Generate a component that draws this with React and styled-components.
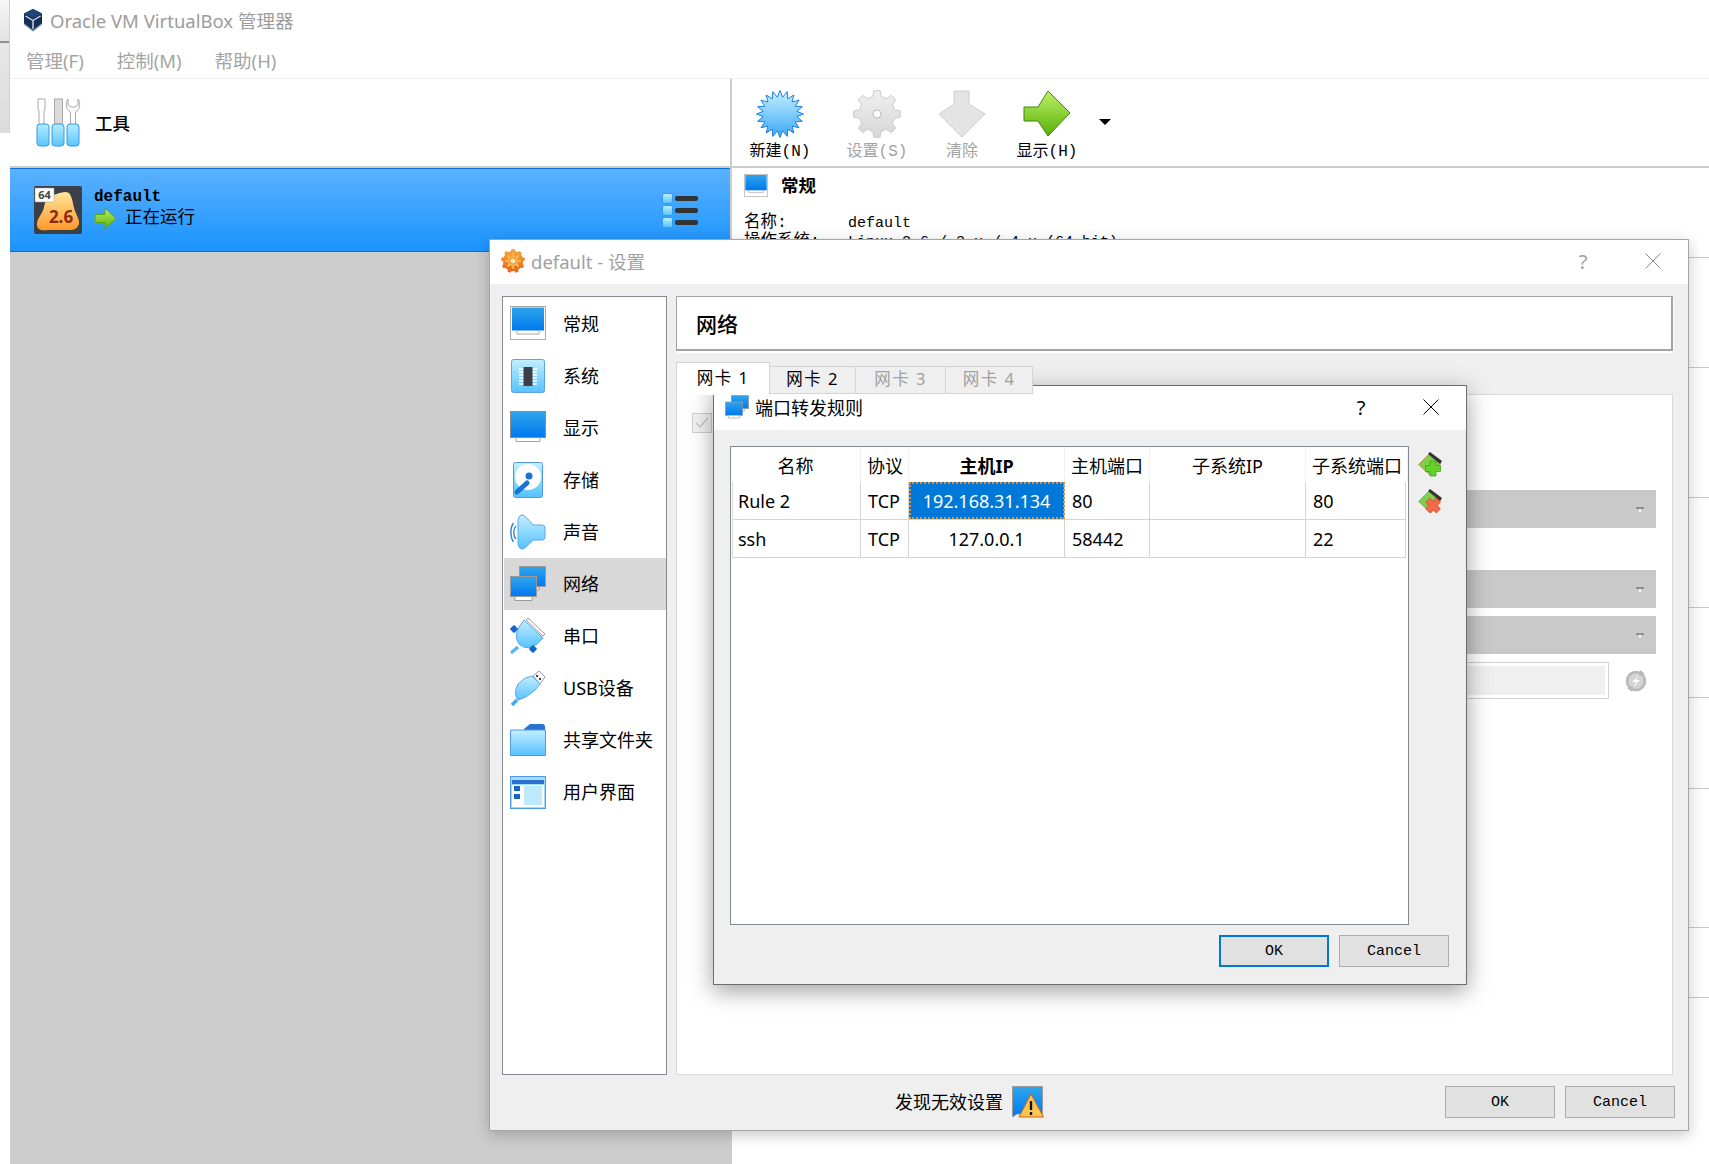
import React from 'react'
import styled, { createGlobalStyle } from 'styled-components'

const SANS = '"Noto Sans", "Noto Sans CJK SC", sans-serif'
const MONO = '"Liberation Mono", "Noto Sans CJK SC", monospace'

const GlobalStyle = createGlobalStyle`
  html, body { margin: 0; padding: 0; background: #fff; }
  body { font-family: ${SANS}; color: #000; }
  * { box-sizing: border-box; }
  svg { flex: none; }
`

const ui = {
  Page: styled.div`
    position: relative;
    display: flex;
    width: 1709px;
    height: 1164px;
    overflow: hidden;
    background: #fff;
  `,
  Strip: styled.div`
    width: 10px;
    flex: none;
    height: 133px;
    border-right: 1px solid #d0d0d0;
    background: linear-gradient(#f6f6f6, #e2e2e2 41px, #8f8f8f 41px, #8f8f8f 43px, #e6e6e6 43px, #dcdcdc);
  `,
  Window: styled.div`
    flex: 1;
    display: flex;
    flex-direction: column;
    min-width: 0;
  `,
  TitleBar: styled.div`
    height: 41px;
    display: flex;
    align-items: center;
    gap: 6px;
    padding: 0 0 2px 12px;
    font-size: 18.500px;
    color: #9c9c9c;
  `,
  MenuBar: styled.div`
    height: 38px;
    display: flex;
    align-items: center;
    gap: 33px;
    padding-left: 16px;
    font-size: 18.500px;
    color: #a4a4a4;
    border-bottom: 1px solid #eee;
  `,
  Split: styled.div`
    flex: 1;
    display: flex;
    min-height: 0;
  `,
  LeftPane: styled.div`
    width: 722px;
    flex: none;
    background: #cdcdcd;
    border-right: 2px solid #cdcdcd;
  `,
  ToolsRow: styled.div`
    height: 89px;
    display: flex;
    align-items: center;
    gap: 14px;
    padding-left: 26px;
    background: #fff;
    border-bottom: 2px solid #ccc;
    font-size: 17.500px;
    font-weight: 500;
  `,
  MachineRow: styled.div`
    height: 84px;
    display: flex;
    align-items: center;
    gap: 12px;
    padding: 0 32px 0 24px;
    background: linear-gradient(#5ab1ff, #1b94fd);
    border-top: 1px solid #0a72d4;
    border-bottom: 1px solid #0a72d4;
  `,
  MachineText: styled.div`
    flex: 1;
    display: flex;
    flex-direction: column;
    margin-top: -3px;
  `,
  MachineName: styled.div`
    font: bold 16px/18px ${MONO};
  `,
  MachineState: styled.div`
    display: flex;
    align-items: center;
    gap: 8px;
    height: 22px;
    margin-top: 1px;
    font-size: 17.500px;
    line-height: 18px;
    span { margin-top: -4px; }
  `,
  RightPane: styled.div`
    flex: 1;
    display: flex;
    flex-direction: column;
  `,
  Toolbar: styled.div`
    height: 89px;
    flex: none;
    display: flex;
    align-items: flex-start;
    gap: 37px;
    padding: 11px 0 0 18px;
    border-bottom: 2px solid #ccc;
  `,
  ToolButton: styled.div`
    width: ${p => p.$w}px;
    display: flex;
    flex-direction: column;
    align-items: center;
    font: 16px/22px ${MONO};
    white-space: nowrap;
    color: ${p => (p.$off ? '#a2a2a2' : '#000')};
    svg { margin-bottom: 3px; }
  `,
  Caret: styled.div`
    margin: 29px 0 0 -15px;
    border-top: 6px solid #000;
    border-left: 6px solid transparent;
    border-right: 6px solid transparent;
  `,
  Section: styled.div`
    height: ${p => p.$h}px;
    flex: none;
    padding: 6px 0 0 12px;
    border-bottom: 1px solid #c9c9c9;
  `,
  SectionHead: styled.div`
    display: flex;
    align-items: center;
    gap: 13px;
    height: 24px;
    margin-bottom: 15px;
    font-size: 17.500px;
    font-weight: 700;
    span { margin-top: -4px; }
  `,
  DetailRow: styled.div`
    display: grid;
    grid-template-columns: 104px 1fr;
    align-items: baseline;
    height: 19px;
    font: 15px/19px ${MONO};
  `,
  DetailLabel: styled.span`
    font-size: 16.500px;
  `,

  Settings: styled.div`
    position: absolute;
    left: 489px;
    top: 239px;
    width: 1200px;
    height: 892px;
    display: flex;
    flex-direction: column;
    background: #efefef;
    border: 1px solid #a5a5a5;
    box-shadow: 0 4px 14px rgba(0, 0, 0, 0.22);
  `,
  DialogTitle: styled.div`
    height: 44px;
    flex: none;
    display: flex;
    align-items: center;
    background: #fff;
    font-size: ${p => p.$size}px;
    color: ${p => (p.$dim ? '#a0a0a0' : '#000')};
    padding: 0 0 2px ${p => p.$left}px;
    gap: 6px;
  `,
  TitleText: styled.div`
    flex: 1;
  `,
  TitleHelp: styled.div`
    width: 70px;
    text-align: center;
    font-size: 20px;
  `,
  TitleClose: styled.div`
    width: 70px;
    margin-left: -6px;
    display: flex;
    justify-content: center;
  `,
  SettingsBody: styled.div`
    flex: 1;
    display: flex;
    gap: 9px;
    padding: 12px 15px 0 12px;
    min-height: 0;
  `,
  Sidebar: styled.div`
    width: 165px;
    flex: none;
    height: 779px;
    padding: 1px 0 1px 1px;
    background: #fff;
    border: 1px solid #868892;
  `,
  SideItem: styled.div`
    height: 52px;
    display: flex;
    align-items: center;
    gap: 17px;
    padding-left: 6px;
    font-size: 18px;
    background: ${p => (p.$active ? '#d8d8d8' : 'transparent')};
    span { margin-top: -3px; }
  `,
  SettingsMain: styled.div`
    flex: 1;
    min-width: 0;
    display: flex;
    flex-direction: column;
  `,
  PageHeader: styled.div`
    height: 55px;
    flex: none;
    display: flex;
    align-items: center;
    padding-left: 19px;
    background: #fff;
    border: 1px solid #a3a3a3;
    border-width: 1px 2px 2px 1px;
    box-shadow: 1px 2px 0 #fff;
    font-size: 21px;
    font-weight: 500;
  `,
  Tabs: styled.div`
    display: flex;
    align-items: flex-end;
    height: 32px;
    margin-top: 11px;
    flex: none;
    position: relative;
    z-index: 1;
  `,
  Tab: styled.div`
    height: ${p => (p.$active ? 33 : 28)}px;
    margin-bottom: ${p => (p.$active ? -1 : 0)}px;
    width: ${p => p.$w}px;
    padding-top: ${p => (p.$active ? 3 : 0)}px;
    text-align: center;
    font-size: 16.500px;
    line-height: 24px;
    letter-spacing: 1.500px;
    white-space: pre;
    color: ${p => (p.$off ? '#a0a0a0' : '#000')};
    background: ${p => (p.$active ? '#fff' : '#efefef')};
    border: 1px solid #d4d4d4;
    border-bottom-color: ${p => (p.$active ? '#fff' : '#d4d4d4')};
    border-left-width: ${p => (p.$active ? 1 : 0)}px;
  `,
  TabPanel: styled.div`
    flex: none;
    height: 681px;
    display: flex;
    flex-direction: column;
    padding: 18px 16px 0 15px;
    background: #fff;
    border: 1px solid #d8d8d8;
  `,
  Checkbox: styled.div`
    width: 20px;
    height: 20px;
    display: flex;
    align-items: center;
    justify-content: center;
    background: #f2f2f2;
    border: 1px solid #cfcfcf;
  `,
  Select: styled.div`
    width: 756px;
    height: 38px;
    flex: none;
    align-self: flex-end;
    margin-top: ${p => p.$top}px;
    display: flex;
    align-items: center;
    justify-content: flex-end;
    padding-right: 12px;
    background: #c9c9c9;
  `,
  SelectArrow: styled.div`
    width: 8px;
    height: 5px;
    border-top: 2px solid #8f8f8f;
    background: linear-gradient(90deg, transparent 3px, #f4f4f4 3px, #f4f4f4 5px, transparent 5px);
  `,
  InputRow: styled.div`
    display: flex;
    align-items: center;
    justify-content: flex-end;
    gap: 15px;
    margin-top: 8px;
    padding-right: 8px;
  `,
  Input: styled.div`
    width: 700px;
    height: 37px;
    padding: 3px;
    background: #fff;
    border: 1px solid #d2d2d2;
    &::after {
      content: '';
      display: block;
      height: 100%;
      background: #efefef;
    }
  `,
  Footer: styled.div`
    height: 44px;
    flex: none;
    display: flex;
    align-items: flex-start;
    justify-content: flex-end;
    gap: 10px;
    margin-top: 9px;
    padding-right: 13px;
  `,
  Warning: styled.div`
    display: flex;
    align-items: center;
    gap: 9px;
    height: 32px;
    margin-right: 391px;
    font-size: 18px;
    span { margin-top: -3px; }
  `,
  Button: styled.div`
    width: 110px;
    height: 32px;
    display: flex;
    align-items: center;
    justify-content: center;
    font: 15px ${MONO};
    background: #e1e1e1;
    border: ${p => (p.$primary ? '2px solid #0078d7' : '1px solid #adadad')};
  `,

  PortDialog: styled.div`
    position: absolute;
    left: 713px;
    top: 385px;
    width: 754px;
    height: 600px;
    display: flex;
    flex-direction: column;
    background: #efefef;
    border: 1px solid #6e6e6e;
    box-shadow: 0 6px 22px rgba(0, 0, 0, 0.38);
  `,
  PortBody: styled.div`
    display: flex;
    gap: 9px;
    padding: 16px 0 0 16px;
  `,
  RuleFrame: styled.div`
    width: 679px;
    height: 479px;
    flex: none;
    background: #fff;
    border: 1px solid #828790;
  `,
  HeaderRow: styled.div`
    display: grid;
    grid-template-columns: 130px 48px 156px 85px 156px 1fr;
    height: 35px;
    font-size: 18px;
  `,
  HeaderCell: styled.div`
    display: flex;
    align-items: center;
    justify-content: ${p => (p.$center ? 'center' : 'flex-start')};
    padding-left: ${p => (p.$center ? 0 : 6)}px;
    font-weight: ${p => (p.$bold ? 700 : 400)};
    white-space: nowrap;
    border-right: 1px solid #f2f2f2;
  `,
  RuleRow: styled.div`
    display: grid;
    grid-template-columns: 128px 48px 156px 85px 156px 1fr;
    height: 38px;
    margin: 0 2px 0 1px;
    border-left: 1px solid #dcdcdc;
    border-bottom: 1px solid #d5d5d5;
    font-size: 18px;
  `,
  RuleCell: styled.div`
    display: flex;
    align-items: center;
    justify-content: ${p => (p.$center ? 'center' : 'flex-start')};
    padding-left: ${p => (p.$center ? 0 : 7)}px;
    border-right: 1px solid #d5d5d5;
    color: ${p => (p.$selected ? '#fff' : '#000')};
    background: ${p => (p.$selected ? '#0078d7' : 'transparent')};
    outline: ${p => (p.$selected ? '2px dotted #f08c2a' : 'none')};
    outline-offset: -2px;
    &:first-child { padding-left: 5px; }
  `,
  SideTools: styled.div`
    display: flex;
    flex-direction: column;
    gap: 12px;
    padding-top: 6px;
  `,
  PortFooter: styled.div`
    display: flex;
    justify-content: flex-end;
    gap: 10px;
    margin-top: 10px;
    padding-right: 17px;
  `,
}

const ring = (cx, cy, ro, ri, n) => {
  const pts = []
  for (let i = 0; i < n * 2; i++) {
    const r = i % 2 ? ri : ro
    const a = (Math.PI * i) / n - Math.PI / 2
    pts.push(`${(cx + r * Math.cos(a)).toFixed(2)},${(cy + r * Math.sin(a)).toFixed(2)}`)
  }
  return pts.join(' ')
}

const cog = (cx, cy, ro, ri, n) => {
  const pts = []
  const step = (Math.PI * 2) / n
  for (let i = 0; i < n; i++) {
    const a = i * step - Math.PI / 2
    const d = step * 0.17
    const e = step * 0.3
    ;[[ri, -e], [ro, -d], [ro, d], [ri, e]].forEach(([r, o]) => {
      pts.push(`${(cx + r * Math.cos(a + o)).toFixed(2)},${(cy + r * Math.sin(a + o)).toFixed(2)}`)
    })
  }
  return pts.join(' ')
}

const Grad = ({ id, from, to }) => (
  <linearGradient id={id} x1="0" y1="0" x2="0" y2="1">
    <stop offset="0" stopColor={from} />
    <stop offset="1" stopColor={to} />
  </linearGradient>
)

const Defs = () => (
  <svg width="0" height="0" style={{ position: 'absolute' }}>
    <defs>
      <Grad id="screen" from="#2fa6ea" to="#0078f0" />
      <Grad id="pale" from="#c4efff" to="#55c2ff" />
      <Grad id="green" from="#bdf268" to="#58ae06" />
      <Grad id="star" from="#c6f0ff" to="#3ba8f6" />
      <Grad id="grey" from="#f0f0f0" to="#d6d6d6" />
      <Grad id="blob" from="#ffe79c" to="#ff982a" />
      <Grad id="handle" from="#b6ecff" to="#5cc6fb" />
      <Grad id="flame" from="#f9a13a" to="#e8661a" />
    </defs>
  </svg>
)

const VBoxLogo = () => (
  <svg width="22" height="24" viewBox="0 0 22 24">
    <polygon points="11,1 20,5.5 20,16 11,23 2,16 2,5.5" fill="#14305a" />
    <polygon points="11,1 20,5.5 11,10 2,5.5" fill="#1f4478" />
    <path d="M11 12.5V21M11 12.5L3.5 8M11 12.5L18.5 8" stroke="#d5deea" strokeWidth="1.4" fill="none" />
    <path d="M2 16l9 7 9-7" stroke="#9aa9bd" strokeWidth="1.2" fill="none" />
  </svg>
)

const ToolsIcon = () => (
  <svg width="45" height="49" viewBox="0 0 45 49">
    <path d="M2 1h7v10l-1 2v14H3V13l-1-2z" fill="#fff" stroke="#a8a8a8" />
    <rect x="18.500" y="1" width="8" height="26" fill="#dadada" stroke="#a8a8a8" />
    <path d="M34.500 27V14C30 12 29 5 32 1V7L35 9H39L42 7V1C45 5 44 12 39.500 14V27Z" fill="#fff" stroke="#a8a8a8" />
    <rect x="1" y="26" width="12" height="22" rx="3" fill="url(#handle)" stroke="#2f9be8" />
    <rect x="16" y="26" width="12" height="22" rx="3" fill="url(#handle)" stroke="#2f9be8" />
    <rect x="31" y="26" width="12" height="22" rx="3" fill="url(#handle)" stroke="#2f9be8" />
  </svg>
)

const MachineIcon = () => (
  <svg width="48" height="48" viewBox="0 0 48 48">
    <rect width="48" height="48" rx="2" fill="#3b4048" />
    <path d="M19 9C24 8 30 4 35 7C39 12 39 20 41 25C43 30 47 36 44 40C41 45 36 44 30 44L14 44C8 45 2 44 3 37C4 31 9 27 10 21C11 15 14 10 19 9Z" fill="url(#blob)" />
    <rect x="1" y="2" width="19" height="14" fill="#fff" stroke="#999" strokeWidth="0.5" />
    <text x="10.500" y="13" textAnchor="middle" fontFamily="Noto Sans" fontWeight="700" fontSize="11" fill="#444">64</text>
    <text x="27" y="37" textAnchor="middle" fontFamily="Noto Sans" fontWeight="700" fontSize="17" fill="#8c2a0c">2.6</text>
  </svg>
)

const SmallArrow = () => (
  <svg width="23" height="23" viewBox="0 0 23 23">
    <path d="M1 7.500H11V1L22 11.500L11 22V15.500H1Z" fill="url(#green)" stroke="#58a80e" />
  </svg>
)

const DetailsIcon = () => (
  <svg width="36" height="34" viewBox="0 0 36 34">
    {[0, 12, 24].map(y => (
      <g key={y}>
        <rect x="0.500" y={y + 0.5} width="10" height="10" rx="2" fill="url(#pale)" stroke="#2f9be8" />
        <rect x="13" y={y + 3} width="23" height="5" rx="2" fill="#333" />
      </g>
    ))}
  </svg>
)

const NewIcon = () => (
  <svg width="48" height="48" viewBox="0 0 48 48">
    <polygon points={ring(24, 24, 23.5, 17, 20)} fill="url(#star)" stroke="#1e80e2" strokeWidth="1" />
  </svg>
)

const GearIcon = () => (
  <svg width="48" height="48" viewBox="0 0 48 48">
    <polygon points={cog(24, 24, 23.5, 18, 8)} fill="url(#grey)" stroke="#cbcbcb" />
    <circle cx="24" cy="24" r="4" fill="#fff" stroke="#bdbdbd" />
  </svg>
)

const DropIcon = () => (
  <svg width="48" height="48" viewBox="0 0 48 48">
    <polygon points="16,1 31,1 31,14 47,24 24,47 1,24 16,14" fill="#e4e4e4" stroke="#cfcfcf" />
  </svg>
)

const ShowIcon = () => (
  <svg width="48" height="48" viewBox="0 0 48 48">
    <polygon points="1,17 15,17 25,1 47,23 25,46 15,31 1,31" fill="url(#green)" stroke="#3f8a08" />
  </svg>
)

const MonitorGeneral = ({ size = 36 }) => (
  <svg width={size} height={size} viewBox="0 0 36 36">
    <rect x="0.500" y="0.500" width="35" height="33" fill="#fff" stroke="#a9a9a9" />
    <rect x="2" y="1.500" width="32" height="23" fill="url(#screen)" />
    <path d="M7 25v3h22v-3" fill="none" stroke="#a9a9a9" />
  </svg>
)

const SystemIcon = () => (
  <svg width="36" height="36" viewBox="0 0 36 36">
    <rect x="1.500" y="1.500" width="33" height="33" rx="2" fill="url(#pale)" stroke="#5da3e4" />
    <path d="M9 11h18M9 14h18M9 17h18M9 20h18M9 23h18M9 26h18" stroke="#fff" strokeWidth="1.4" />
    <rect x="13.500" y="9" width="9" height="19" fill="#3a3f48" />
  </svg>
)

const DisplayIcon = () => (
  <svg width="36" height="36" viewBox="0 0 36 36">
    <rect x="0.500" y="1.500" width="35" height="26" fill="url(#screen)" stroke="#8d8d8d" />
    <path d="M6 28v3.500h24V28" fill="#fff" stroke="#a5a5a5" />
  </svg>
)

const StorageIcon = () => (
  <svg width="36" height="36" viewBox="0 0 36 36">
    <rect x="3.500" y="0.500" width="29" height="35" rx="2" fill="url(#pale)" stroke="#4f9be3" />
    <circle cx="18" cy="15" r="13" fill="#fff" />
    <circle cx="19" cy="14" r="3.500" fill="#1b72d6" />
    <path d="M7 30L17 21" stroke="#1b72d6" strokeWidth="5" strokeLinecap="round" />
  </svg>
)

const AudioIcon = () => (
  <svg width="36" height="36" viewBox="0 0 36 36">
    <path d="M6 12C3 15 3 22 6 25M3.500 9C0 14 0 23 3.500 28" fill="none" stroke="#2f86dc" strokeWidth="1.4" />
    <path d="M8 6Q9 1 12 1Q15 1 23 11H32Q35 11 35 14V23Q35 26 32 26H23Q15 35 12 35Q9 35 8 30Z" fill="url(#pale)" stroke="#59a5e8" />
  </svg>
)

const NetworkIcon = ({ size = 36 }) => (
  <svg width={size} height={size} viewBox="0 0 36 36">
    <rect x="9.500" y="0.500" width="26" height="20" fill="url(#screen)" stroke="#9a9a9a" />
    <path d="M29 21v3h-4" fill="#fff" stroke="#9a9a9a" />
    <rect x="0.500" y="10.500" width="26" height="20" fill="url(#screen)" stroke="#9a9a9a" />
    <path d="M5 31v3.500h17V31" fill="#fff" stroke="#9a9a9a" />
  </svg>
)

const SerialIcon = () => (
  <svg width="36" height="38" viewBox="0 0 36 38">
    <path d="M18 1L35 17L33 19L16 3Z" fill="#fff" stroke="#9a9a9a" />
    <path d="M14 3L33 21L27 27Q18 34 10 28Q3 20 9 10Z" fill="url(#pale)" stroke="#59a5e8" />
    <path d="M8 30L1 36" stroke="#55b4f5" strokeWidth="3" />
    <rect x="1" y="9" width="6" height="6" rx="1" transform="rotate(45 4 12)" fill="#1666c8" />
    <rect x="20" y="29" width="6" height="6" rx="1" transform="rotate(45 23 32)" fill="#1666c8" />
  </svg>
)

const UsbIcon = () => (
  <svg width="36" height="36" viewBox="0 0 36 36">
    <path d="M23 6L29 1L35 7L30 14Z" fill="#fff" stroke="#9a9a9a" />
    <circle cx="27" cy="6" r="1.200" fill="#444" />
    <circle cx="30" cy="9" r="1.200" fill="#444" />
    <path d="M22 6L30 14L25 20Q17 28 8 30Q3 24 8 14Q14 7 22 6Z" fill="url(#pale)" stroke="#59a5e8" />
    <path d="M7 30L2 35" stroke="#4aa8ee" strokeWidth="3.500" />
  </svg>
)

const FolderIcon = () => (
  <svg width="36" height="32" viewBox="0 0 36 32">
    <path d="M14 5L20 0H32Q35 0 35 3V6H14Z" fill="#2a71d0" />
    <path d="M0.500 6H35.500V31.500H0.500Z" fill="url(#pale)" stroke="#4f9be3" />
  </svg>
)

const InterfaceIcon = () => (
  <svg width="36" height="33" viewBox="0 0 36 33">
    <rect x="0.500" y="0.500" width="35" height="32" fill="#9edcff" stroke="#4f9be3" />
    <rect x="2" y="4" width="32" height="4" fill="#2a71d0" />
    <rect x="2" y="9" width="32" height="22" fill="#fff" />
    <rect x="14" y="10" width="18" height="19" fill="#bdeaff" />
    <rect x="4" y="10" width="6" height="5" fill="#1666c8" />
    <rect x="4" y="18" width="6" height="5" fill="#1666c8" />
  </svg>
)

const OrangeGear = () => (
  <svg width="24" height="24" viewBox="0 0 24 24">
    <polygon points={cog(12, 12, 12, 10, 9)} fill="url(#flame)" />
    <circle cx="12" cy="12" r="10" fill="url(#flame)" />
    <polygon points={cog(12, 12, 8, 5, 8)} fill="#fbb64f" />
    <circle cx="12" cy="12" r="3" fill="#ffeeb0" stroke="#e8761a" strokeWidth="0.800" />
  </svg>
)

const CloseX = ({ color }) => (
  <svg width="16" height="16" viewBox="0 0 16 16">
    <path d="M0.500 0.500L15.500 15.500M15.500 0.500L0.500 15.500" stroke={color} strokeWidth="1" />
  </svg>
)

const Check = () => (
  <svg width="14" height="12" viewBox="0 0 14 12">
    <path d="M1 6L5 10L13 1" fill="none" stroke="#c8c8c8" strokeWidth="1.500" />
  </svg>
)

const RefreshIcon = () => (
  <svg width="24" height="24" viewBox="0 0 24 24">
    <circle cx="12" cy="12" r="9" fill="#d4d4d4" stroke="#b8b8b8" strokeWidth="2.500" />
    <path d="M15.500 6L8 13H12L8.500 18.500L16 11H12Z" fill="#fff" />
    <path d="M16 1l5 4-6 2zM8 23l-5-4 6-2z" fill="#b8b8b8" />
  </svg>
)

const WarningIcon = () => (
  <svg width="32" height="32" viewBox="0 0 32 32">
    <path d="M0.500 0.500H30.500V28H5L0.500 31Z" fill="url(#screen)" stroke="#9a9a9a" />
    <path d="M19 8L31.500 31H7Z" fill="#ffc64d" stroke="#d0621a" />
    <path d="M19 15v9M19 26v3" stroke="#111" strokeWidth="2.400" />
  </svg>
)

const RuleAction = ({ remove }) => (
  <svg width="24" height="25" viewBox="0 0 24 25">
    <path d="M0.500 12.500L11 2L23 11L13 24Z" fill="#7ed04c" stroke="#c87840" strokeWidth="0.700" />
    <path d="M10 2L12 0L24 9L22 12Z" fill="#333" />
    {remove ? (
      <path
        d="M12 9h6v4.500h4.500v6H18v4.500h-6V19.500H7.500v-6H12z"
        transform="rotate(45 15 16.500)"
        fill="#f4694a"
        stroke="#d8461f"
        strokeWidth="0.700"
      />
    ) : (
      <path d="M12 9h6v4.500h4.500v6H18v4.500h-6V19.500H7.500v-6H12z" fill="#63d22a" stroke="#3d9a12" strokeWidth="0.700" />
    )}
  </svg>
)

const sideItems = [
  ['常规', <MonitorGeneral key="a" />],
  ['系统', <SystemIcon key="b" />],
  ['显示', <DisplayIcon key="c" />],
  ['存储', <StorageIcon key="d" />],
  ['声音', <AudioIcon key="e" />],
  ['网络', <NetworkIcon key="f" />],
  ['串口', <SerialIcon key="g" />],
  ['USB设备', <UsbIcon key="h" />],
  ['共享文件夹', <FolderIcon key="i" />],
  ['用户界面', <InterfaceIcon key="j" />],
]

const sectionHeights = [110, 130, 110, 90, 91, 139, 70]

const App = () => (
  <ui.Page>
    <GlobalStyle />
    <Defs />
    <ui.Strip />
    <ui.Window>
      <ui.TitleBar>
        <VBoxLogo />
        Oracle VM VirtualBox 管理器
      </ui.TitleBar>
      <ui.MenuBar>
        <span>管理(F)</span>
        <span>控制(M)</span>
        <span>帮助(H)</span>
      </ui.MenuBar>
      <ui.Split>
        <ui.LeftPane>
          <ui.ToolsRow>
            <ToolsIcon />
            工具
          </ui.ToolsRow>
          <ui.MachineRow>
            <MachineIcon />
            <ui.MachineText>
              <ui.MachineName>default</ui.MachineName>
              <ui.MachineState>
                <SmallArrow />
                <span>正在运行</span>
              </ui.MachineState>
            </ui.MachineText>
            <DetailsIcon />
          </ui.MachineRow>
        </ui.LeftPane>
        <ui.RightPane>
          <ui.Toolbar>
            <ui.ToolButton $w={60}><NewIcon />新建(N)</ui.ToolButton>
            <ui.ToolButton $w={60} $off><GearIcon />设置(S)</ui.ToolButton>
            <ui.ToolButton $w={36} $off><DropIcon />清除</ui.ToolButton>
            <ui.ToolButton $w={60}><ShowIcon />显示(H)</ui.ToolButton>
            <ui.Caret />
          </ui.Toolbar>
          <ui.Section $h={90}>
            <ui.SectionHead>
              <MonitorGeneral size={24} />
              <span>常规</span>
            </ui.SectionHead>
            <ui.DetailRow><ui.DetailLabel>名称:</ui.DetailLabel><span>default</span></ui.DetailRow>
            <ui.DetailRow><ui.DetailLabel>操作系统:</ui.DetailLabel><span>Linux 2.6 / 3.x / 4.x (64-bit)</span></ui.DetailRow>
          </ui.Section>
          {sectionHeights.map((h, i) => <ui.Section key={i} $h={h} />)}
        </ui.RightPane>
      </ui.Split>
    </ui.Window>

    <ui.Settings>
      <ui.DialogTitle $dim $left={11} $size={18.5}>
        <OrangeGear />
        <ui.TitleText>default - 设置</ui.TitleText>
        <ui.TitleHelp>?</ui.TitleHelp>
        <ui.TitleClose><CloseX color="#8c8c8c" /></ui.TitleClose>
      </ui.DialogTitle>
      <ui.SettingsBody>
        <ui.Sidebar>
          {sideItems.map(([label, icon]) => (
            <ui.SideItem key={label} $active={label === '网络'}>
              {icon}
              <span>{label}</span>
            </ui.SideItem>
          ))}
        </ui.Sidebar>
        <ui.SettingsMain>
          <ui.PageHeader>网络</ui.PageHeader>
          <ui.Tabs>
            <ui.Tab $active $w={94}>网卡 1</ui.Tab>
            <ui.Tab $w={86}>网卡 2</ui.Tab>
            <ui.Tab $w={90} $off>网卡 3</ui.Tab>
            <ui.Tab $w={87} $off>网卡 4</ui.Tab>
          </ui.Tabs>
          <ui.TabPanel>
            <ui.Checkbox><Check /></ui.Checkbox>
            <ui.Select $top={57}><ui.SelectArrow /></ui.Select>
            <ui.Select $top={42}><ui.SelectArrow /></ui.Select>
            <ui.Select $top={8}><ui.SelectArrow /></ui.Select>
            <ui.InputRow>
              <ui.Input />
              <RefreshIcon />
            </ui.InputRow>
          </ui.TabPanel>
        </ui.SettingsMain>
      </ui.SettingsBody>
      <ui.Footer>
        <ui.Warning>
          <span>发现无效设置</span>
          <WarningIcon />
        </ui.Warning>
        <ui.Button>OK</ui.Button>
        <ui.Button>Cancel</ui.Button>
      </ui.Footer>
    </ui.Settings>

    <ui.PortDialog>
      <ui.DialogTitle $left={11} $size={18}>
        <NetworkIcon size={24} />
        <ui.TitleText>端口转发规则</ui.TitleText>
        <ui.TitleHelp>?</ui.TitleHelp>
        <ui.TitleClose><CloseX color="#000" /></ui.TitleClose>
      </ui.DialogTitle>
      <ui.PortBody>
        <ui.RuleFrame>
          <ui.HeaderRow>
            <ui.HeaderCell $center>名称</ui.HeaderCell>
            <ui.HeaderCell>协议</ui.HeaderCell>
            <ui.HeaderCell $center $bold>主机IP</ui.HeaderCell>
            <ui.HeaderCell>主机端口</ui.HeaderCell>
            <ui.HeaderCell $center>子系统IP</ui.HeaderCell>
            <ui.HeaderCell>子系统端口</ui.HeaderCell>
          </ui.HeaderRow>
          <ui.RuleRow>
            <ui.RuleCell>Rule 2</ui.RuleCell>
            <ui.RuleCell>TCP</ui.RuleCell>
            <ui.RuleCell $center $selected>192.168.31.134</ui.RuleCell>
            <ui.RuleCell>80</ui.RuleCell>
            <ui.RuleCell />
            <ui.RuleCell>80</ui.RuleCell>
          </ui.RuleRow>
          <ui.RuleRow>
            <ui.RuleCell>ssh</ui.RuleCell>
            <ui.RuleCell>TCP</ui.RuleCell>
            <ui.RuleCell $center>127.0.0.1</ui.RuleCell>
            <ui.RuleCell>58442</ui.RuleCell>
            <ui.RuleCell />
            <ui.RuleCell>22</ui.RuleCell>
          </ui.RuleRow>
        </ui.RuleFrame>
        <ui.SideTools>
          <RuleAction />
          <RuleAction remove />
        </ui.SideTools>
      </ui.PortBody>
      <ui.PortFooter>
        <ui.Button $primary>OK</ui.Button>
        <ui.Button>Cancel</ui.Button>
      </ui.PortFooter>
    </ui.PortDialog>
  </ui.Page>
)

export default App
